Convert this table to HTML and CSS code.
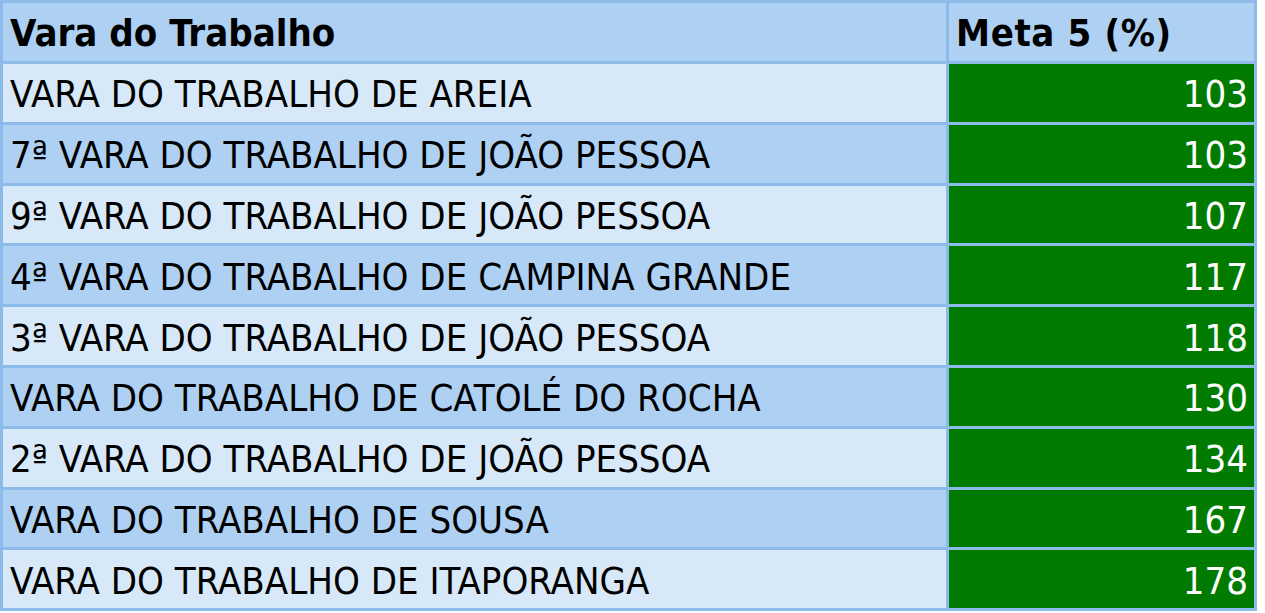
FILE: index.html
```html
<!DOCTYPE html>
<html lang="pt">
<head>
<meta charset="utf-8">
<title>Meta 5</title>
<link rel="stylesheet" href="styles.css">
</head>
<body>
<table class="meta-table">
  <thead>
    <tr class="head-row">
      <th class="col-name">Vara do Trabalho</th>
      <th class="col-val">Meta 5 (%)</th>
    </tr>
  </thead>
  <tbody>
    <tr class="row light"><td class="name">VARA DO TRABALHO DE AREIA</td><td class="val">103</td></tr>
    <tr class="row dark"><td class="name">7ª VARA DO TRABALHO DE JOÃO PESSOA</td><td class="val">103</td></tr>
    <tr class="row light"><td class="name">9ª VARA DO TRABALHO DE JOÃO PESSOA</td><td class="val">107</td></tr>
    <tr class="row dark"><td class="name">4ª VARA DO TRABALHO DE CAMPINA GRANDE</td><td class="val">117</td></tr>
    <tr class="row light"><td class="name">3ª VARA DO TRABALHO DE JOÃO PESSOA</td><td class="val">118</td></tr>
    <tr class="row dark"><td class="name">VARA DO TRABALHO DE CATOLÉ DO ROCHA</td><td class="val">130</td></tr>
    <tr class="row light"><td class="name">2ª VARA DO TRABALHO DE JOÃO PESSOA</td><td class="val">134</td></tr>
    <tr class="row dark"><td class="name">VARA DO TRABALHO DE SOUSA</td><td class="val">167</td></tr>
    <tr class="row light"><td class="name">VARA DO TRABALHO DE ITAPORANGA</td><td class="val">178</td></tr>
  </tbody>
</table>
</body>
</html>
```
FILE: styles.css
```css
html, body {
  margin: 0;
  padding: 0;
  background: #ffffff;
}

.meta-table {
  border-collapse: separate;
  border-spacing: 3px;
  background: #8cbbe9;
  width: 1257px;
  table-layout: fixed;
  font-family: "DejaVu Sans Condensed", "DejaVu Sans", sans-serif;
  font-stretch: condensed;
  color: #000;
}

.meta-table th,
.meta-table td {
  box-sizing: border-box;
  padding: 0 8px 0 7px;
  white-space: nowrap;
  overflow: hidden;
}

.col-name { width: 943px; }
.col-val { width: 305px; }

.head-row th {
  height: 58px;
  background: #add0f3;
  text-align: left;
  font-weight: bold;
  font-size: 38px;
  padding-top: 1px;
}

.head-row th.col-val {
  letter-spacing: 0.6px;
}

.row td {
  height: 57.8px;
  font-size: 38px;
  padding-top: 3px;
}

.row.light td.name { background: #d7e8f8; }
.row.dark td.name { background: #add0f3; }

.row td.val {
  background: #007b00;
  color: #ffffff;
  text-align: right;
  padding-right: 6px;
}
```
